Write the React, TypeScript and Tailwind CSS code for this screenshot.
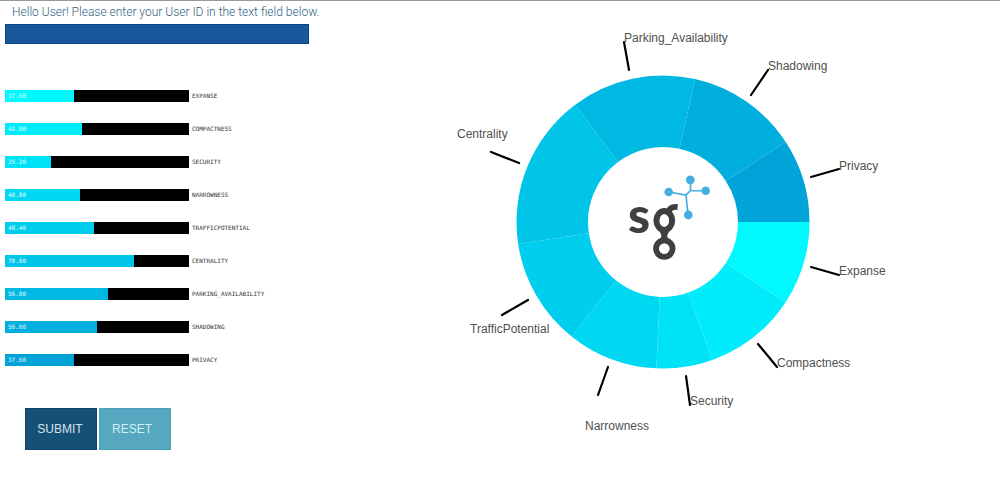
import React from "react";

type Factor = {
  name: string;
  value: number;
  bar: string;
  slice: string;
  line: [number, number, number, number];
  label: [number, number];
};

const FACTORS: Factor[] = [
  { name: "Expanse", value: 37.6, bar: "bg-[#00f8ff]", slice: "fill-[#00f8ff]", line: [811, 267, 839, 275], label: [839, 275] },
  { name: "Compactness", value: 42, bar: "bg-[#00ecfb]", slice: "fill-[#00ecfb]", line: [758, 344, 777, 367], label: [777, 367] },
  { name: "Security", value: 25.2, bar: "bg-[#00e2f6]", slice: "fill-[#00e2f6]", line: [686, 376, 690, 405], label: [690, 405] },
  { name: "Narrowness", value: 40.8, bar: "bg-[#00d8f2]", slice: "fill-[#00d8f2]", line: [608, 367, 598, 395], label: [585, 430] },
  { name: "TrafficPotential", value: 48.4, bar: "bg-[#00ceee]", slice: "fill-[#00ceee]", line: [528, 300, 502, 315], label: [470, 333] },
  { name: "Centrality", value: 70, bar: "bg-[#00c4e8]", slice: "fill-[#00c4e8]", line: [519, 163, 491, 152], label: [457, 138] },
  { name: "Parking_Availability", value: 56, bar: "bg-[#00b9e2]", slice: "fill-[#00b9e2]", line: [629, 70, 624, 42], label: [624, 42] },
  { name: "Shadowing", value: 50, bar: "bg-[#00afdd]", slice: "fill-[#00afdd]", line: [751, 95, 768, 70], label: [768, 70] },
  { name: "Privacy", value: 37.6, bar: "bg-[#00a4d8]", slice: "fill-[#00a4d8]", line: [811, 177, 839, 169], label: [839, 170] },
];

const CENTER = { x: 663, y: 222 };
const OUTER = 146.5;
const INNER = 75;
const TOTAL = FACTORS.reduce((sum, f) => sum + f.value, 0);

function point(radius: number, angle: number) {
  return `${CENTER.x + radius * Math.cos(angle)} ${CENTER.y + radius * Math.sin(angle)}`;
}

function slicePath(start: number, end: number) {
  return `M${point(OUTER, start)} A${OUTER} ${OUTER} 0 0 1 ${point(OUTER, end)} L${point(INNER, end)} A${INNER} ${INNER} 0 0 0 ${point(INNER, start)}Z`;
}

function FactorBar({ factor }: { factor: Factor }) {
  return (
    <li className="flex items-center gap-[3px] font-['DejaVu_Sans_Mono',monospace] text-[6px] leading-3">
      <div className="h-3 w-[184px] bg-black">
        <div
          className={`flex h-full items-center pl-[3px] text-white/90 ${factor.bar}`}
          style={{ width: `${factor.value}%` }}
        >
          {factor.value.toFixed(2)}
        </div>
      </div>
      <span className="text-[#333] uppercase">{factor.name}</span>
    </li>
  );
}

function Logo() {
  return (
    <g>
      <text x="628" y="233" className="fill-[#3f3f41] font-['Lato',sans-serif] text-[50px] font-black">
        s
      </text>
      <g fill="none" stroke="#3f3f41">
        <ellipse cx="664.3" cy="220.5" rx="7.8" ry="9.3" strokeWidth="6.2" />
        <ellipse cx="664.3" cy="248.6" rx="8.2" ry="8.2" strokeWidth="6" />
        <path d="M668 214 C668.5 208.5 672 206.6 677.6 207" strokeWidth="5.8" />
      </g>
      <path d="M657 228 H671.6 C669 232 667.3 234 667.3 236 Q667.3 239 672 243 H656.6 Q661.3 239 661.3 236 C661.3 234 660 232 657 228Z" fill="#3f3f41" />
      <ellipse cx="664.3" cy="220.5" rx="4.7" ry="6.2" fill="#fff" />
      <circle cx="664.3" cy="248.6" r="5.2" fill="#fff" />
      <path d="M669 192 L686 195 L690.5 190.5 L706 191 M690.5 180 V190.5 M686 195 L688 215" fill="none" stroke="#45aee0" strokeWidth="1.7" />
      <g fill="#45aee0">
        <circle cx="668.7" cy="192" r="4.3" />
        <circle cx="690.3" cy="179.8" r="4.4" />
        <circle cx="705.7" cy="190.8" r="4.3" />
        <circle cx="688.3" cy="215" r="4.4" />
      </g>
    </g>
  );
}

function DonutChart() {
  let angle = 0;
  const slices = FACTORS.map((factor) => {
    const start = angle;
    angle += (factor.value / TOTAL) * Math.PI * 2;
    return { factor, start, end: angle };
  });
  return (
    <svg viewBox="450 1 550 470" className="h-auto w-full" role="img" aria-label="Factor shares">
      {slices.map(({ factor, start, end }) => (
        <path key={factor.name} d={slicePath(start, end)} className={factor.slice} />
      ))}
      <Logo />
      {FACTORS.map(({ name, line, label }) => (
        <g key={name}>
          <line x1={line[0]} y1={line[1]} x2={line[2]} y2={line[3]} stroke="#000" strokeWidth="2.2" strokeLinecap="round" />
          <text x={label[0]} y={label[1]} className="fill-[#505050] font-['Liberation_Sans',sans-serif] text-[12px]">
            {name}
          </text>
        </g>
      ))}
    </svg>
  );
}

export default function App() {
  return (
    <main className="grid grid-cols-[9fr_11fr] border-t border-[#999] bg-white font-['Liberation_Sans',sans-serif] text-[12px]">
      <form className="pl-[5px]" onSubmit={(event) => event.preventDefault()}>
        <label htmlFor="user-id" className="block pt-[3px] pl-[7px] font-['Roboto','Liberation_Sans',sans-serif] leading-4 font-light text-[#2f5f85]">
          Hello User! Please enter your User ID in the text field below.
        </label>
        <input
          id="user-id"
          type="text"
          className="mt-1 block h-5 w-[304px] border border-[#0b4289] bg-[#17599b] px-1 text-white outline-none"
        />
        <ul className="mt-[46px] flex flex-col gap-[21px]">
          {FACTORS.map((factor) => (
            <FactorBar key={factor.name} factor={factor} />
          ))}
        </ul>
        <div className="mt-[42px] flex gap-[2px] pl-5">
          <button type="submit" className="h-[42px] w-[72px] border border-[#0f4070] bg-[#155075] pr-[2px] text-[#d3e3ee]">
            SUBMIT
          </button>
          <button type="reset" className="h-[42px] w-[72px] border border-[#4ba0bc] bg-[#55a8c0] pr-[6px] text-[#d3eef5]">
            RESET
          </button>
        </div>
      </form>
      <DonutChart />
    </main>
  );
}
